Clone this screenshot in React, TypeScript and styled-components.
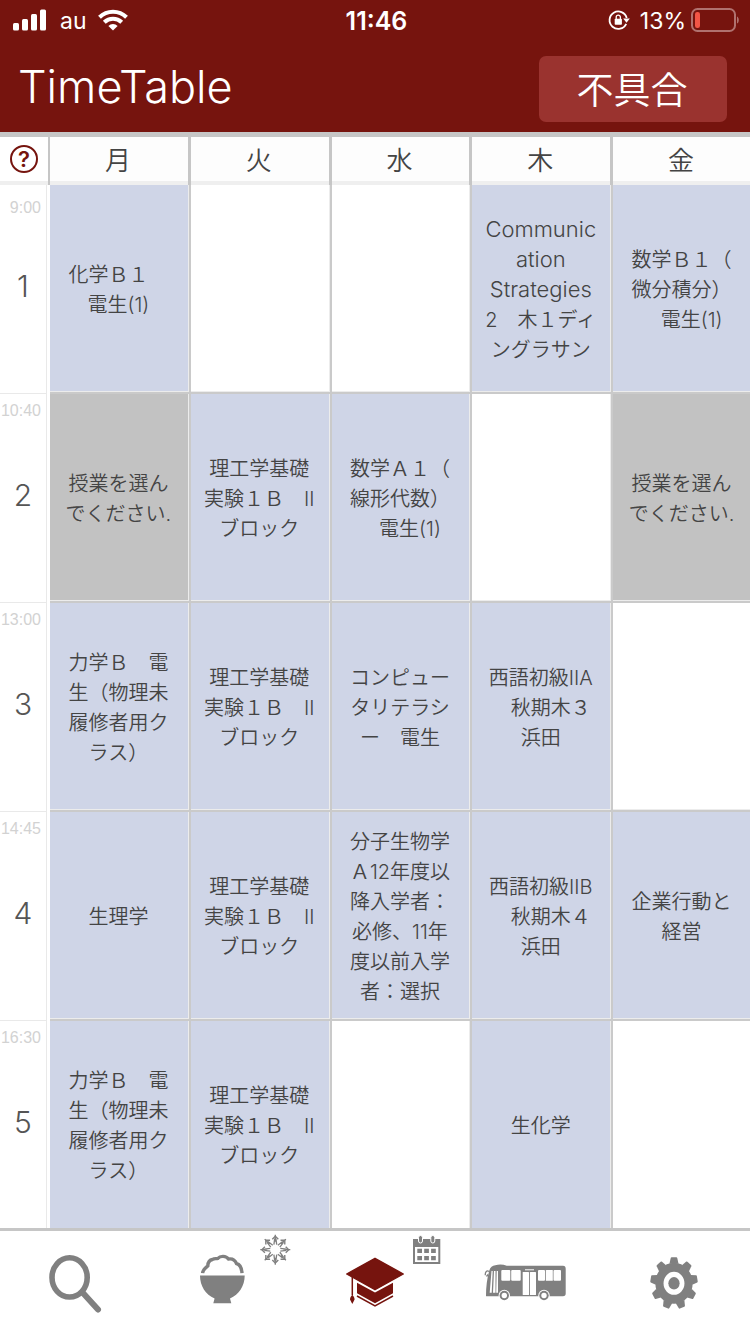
import React from "react";
import styled, { createGlobalStyle } from "styled-components";

const maroon = "#76140e";
const iconGrey = "#808080";
const ruleGrey = "#c6c6c6";

const GlobalStyle = createGlobalStyle`
  *, *::before, *::after { box-sizing: border-box; }
  body {
    margin: 0;
    background: #fff;
    color: #444;
    font-family: Inter, "Noto Sans CJK JP", sans-serif;
    font-weight: 350;
  }
`;

const Screen = styled.div`
  display: flex;
  flex-direction: column;
  min-height: 100vh;
`;

const Header = styled.header`
  background: ${maroon};
  color: #fff;
  border-bottom: 5px solid ${ruleGrey};
`;

const StatusBar = styled.div`
  display: grid;
  grid-template-columns: 1fr auto 1fr;
  align-items: center;
  height: 46px;
  padding: 0 10px 6px 13px;
  font-size: 23px;
  line-height: 38px;
  font-weight: 400;
`;

const StatusGroup = styled.div<{ $end?: boolean }>`
  display: flex;
  align-items: center;
  justify-content: ${(p) => (p.$end ? "flex-end" : "flex-start")};
  gap: ${(p) => (p.$end ? "5px" : "11px")};
`;

const StatusText = styled.span`
  padding: 2px 0 0 2px;
`;

const Clock = styled.time`
  padding-top: 2px;
  font-size: 25px;
  font-weight: 600;
`;

const Percent = styled(StatusText)`
  padding-left: 5px;
`;

const TitleBar = styled.div`
  display: flex;
  align-items: center;
  justify-content: space-between;
  height: 86px;
  padding: 0 23px 0 18px;
`;

const Title = styled.h1`
  margin: 0;
  padding-bottom: 4px;
  font-size: 45px;
  line-height: 60px;
  font-weight: 300;
`;

const ReportButton = styled.button`
  width: 188px;
  height: 66px;
  padding: 3px 2px 0 0;
  border: 0;
  border-radius: 7px;
  background: #9a332f;
  color: #fff;
  font: inherit;
  font-size: 37px;
  line-height: 60px;
`;

const TableFrame = styled.main`
  flex: 1;
  overflow: hidden;
`;

const Grid = styled.table`
  width: calc(100% + 4px);
  table-layout: fixed;
  border-collapse: separate;
  border-spacing: 0;
`;

const PeriodColumn = styled.col`
  width: 50px;
`;

const HeadRow = styled.tr`
  height: 48px;
`;

const DayHead = styled.th`
  padding: 0 2px 0 0;
  border-right: 3px solid ${ruleGrey};
  box-shadow: inset 0 -4px #efefef;
  background: #fdfdfd;
  font-size: 26px;
  line-height: 44px;
  font-weight: 350;
`;

const HelpHead = styled.th`
  padding: 0 0 4px 10px;
  border-right: 2px solid ${ruleGrey};
  box-shadow: inset 0 -4px #efefef;
  text-align: left;
`;

const HelpButton = styled.button`
  display: block;
  width: 28px;
  height: 28px;
  padding: 0;
  border: 2px solid ${maroon};
  border-radius: 50%;
  background: #fff;
  color: ${maroon};
  font: inherit;
  font-size: 22px;
  line-height: 24px;
  font-weight: 600;
`;

const PeriodRow = styled.tr`
  height: 209px;
  &:last-child { height: 207px; }
`;

const PeriodHead = styled.th`
  height: inherit;
  padding: 0 3px 0 0;
  vertical-align: top;
  font-weight: 300;
`;

const PeriodBox = styled.div`
  display: flex;
  flex-direction: column;
  align-items: center;
  height: 209px;
  border: solid #e9e9e9;
  border-width: 0 1px 1px 0;
  ${PeriodRow}:last-child & { height: 207px; border-bottom: 0; }
`;

const StartTime = styled.time`
  align-self: flex-end;
  height: 36px;
  padding: 4px 5px 0 0;
  color: #d2d2d2;
  font-family: "Liberation Sans", sans-serif;
  font-size: 16px;
  line-height: 26px;
  ${PeriodRow}:first-child & { padding-top: 10px; }
`;

const PeriodNumber = styled.span`
  margin-top: 45px;
  color: #555;
  font-size: 30px;
  line-height: 40px;
`;

const cellColor = { empty: "#fff", course: "#cfd5e7", pending: "#c2c2c2" };

const CourseCell = styled.td<{ $kind: keyof typeof cellColor }>`
  padding: 2px 2px 0 0;
  border: solid #cacaca;
  border-width: 0 2px 2px 0;
  box-shadow: inset -1px -1px #ececec;
  background: ${(p) => cellColor[p.$kind]};
  font-size: 20px;
  line-height: 30px;
  text-align: center;
  white-space: pre;
  ${PeriodRow}:last-child & { border-bottom: 0; box-shadow: inset -1px 0 #ececec; }
`;

const Latin = styled.span`
  font-size: 22px;
  line-height: 22px;
`;

const TabBar = styled.nav`
  display: grid;
  grid-template-columns: repeat(5, 1fr);
  border-top: 3px solid ${ruleGrey};
`;

const Tab = styled.a`
  display: flex;
  justify-content: center;
  color: ${(p) => (p["aria-current"] ? maroon : iconGrey)};
`;

const TabIcon = styled.svg`
  display: block;
  width: 150px;
  height: 103px;
`;

const pending = "授業を選ん\nでください.";
const experiment = "理工学基礎\n実験１Ｂ　II\nブロック";
const mechanics = "力学Ｂ　電\n生（物理未\n履修者用ク\nラス）";

const days = ["月", "火", "水", "木", "金"];

const periods: { start: string; courses: string[] }[] = [
  {
    start: "9:00",
    courses: [
      "化学Ｂ１　\n電生(1)",
      "",
      "",
      "Communic\nation\nStrategies\n2　木１ディ\nングラサン",
      "数学Ｂ１（\n微分積分）\n　電生(1)",
    ],
  },
  {
    start: "10:40",
    courses: [pending, experiment, "数学Ａ１（\n線形代数）\n　電生(1)", "", pending],
  },
  {
    start: "13:00",
    courses: [
      mechanics,
      experiment,
      "コンピュー\nタリテラシ\nー　電生",
      "西語初級IIA\n　秋期木３\n浜田",
      "",
    ],
  },
  {
    start: "14:45",
    courses: [
      "生理学",
      experiment,
      "分子生物学\nＡ12年度以\n降入学者：\n必修、11年\n度以前入学\n者：選択",
      "西語初級IIB\n　秋期木４\n浜田",
      "企業行動と\n経営",
    ],
  },
  { start: "16:30", courses: [mechanics, experiment, "", "生化学", ""] },
];

const kindOf = (course: string) =>
  course === "" ? "empty" : course === pending ? "pending" : "course";

const CourseName = ({ text }: { text: string }) => (
  <>
    {text
      .split(/([A-Za-z]{4,})/)
      .map((run, i) => (i % 2 ? <Latin key={i}>{run}</Latin> : run))}
  </>
);

const SignalIcon = () => (
  <svg width="34" height="22" viewBox="0 0 34 22" fill="#fff" aria-hidden="true">
    <rect x="0" y="14" width="6" height="7.5" rx="1.5" />
    <rect x="9" y="10" width="6" height="11.5" rx="1.5" />
    <rect x="18" y="5" width="6" height="16.5" rx="1.5" />
    <rect x="27" y="0.5" width="6" height="21" rx="1.5" />
  </svg>
);

const WifiIcon = () => (
  <svg width="30" height="22" viewBox="0 0 30 22" fill="none" stroke="#fff" strokeWidth="4" aria-hidden="true">
    <path d="M1.5 8.3a19.3 19.3 0 0 1 27 0" />
    <path d="M6.3 13.3a12.4 12.4 0 0 1 17.4 0" />
    <path d="M15 21.5l-4.6-4.6a6.6 6.6 0 0 1 9.2 0z" fill="#fff" stroke="none" />
  </svg>
);

const RotationLockIcon = () => (
  <svg width="22" height="22" viewBox="0 0 22 22" aria-hidden="true">
    <path d="M18.2 14.8A8.7 8.7 0 1 1 18.7 9" fill="none" stroke="#fff" strokeWidth="1.8" />
    <path d="M15.2 9.5h6.6l-3.3 4.2z" fill="#fff" />
    <rect x="6.7" y="9.8" width="7.2" height="6" rx="0.8" fill="#fff" />
    <path d="M8.2 10V8.2a2.1 2.1 0 0 1 4.2 0V10" fill="none" stroke="#fff" strokeWidth="1.3" />
  </svg>
);

const BatteryIcon = () => (
  <svg width="49" height="24" viewBox="0 0 49 24" aria-hidden="true">
    <rect x="1" y="1" width="43" height="22" rx="5.5" fill="none" stroke="#b0726f" strokeWidth="2" />
    <path d="M46 8.5c2.4 1 2.4 6 0 7z" fill="#b0726f" />
    <rect x="4" y="4" width="5" height="16" rx="2.2" fill="#f25546" />
  </svg>
);

const SearchIcon = () => (
  <TabIcon viewBox="0 0 150 103" fill="none" stroke="currentColor" aria-hidden="true">
    <ellipse cx="69.6" cy="46.4" rx="17.6" ry="19.6" strokeWidth="5.6" />
    <path d="M83 62l15 16.5" strokeWidth="6" strokeLinecap="round" />
  </TabIcon>
);

const MealIcon = () => (
  <TabIcon viewBox="0 0 150 103" fill="currentColor" aria-hidden="true">
    <path d="M50 44.5h44.7C94.7 55 89 63.5 80 67.5l1.3 4.8H63.3L64.6 67.5C55.5 63.5 50 55 50 44.5z" />
    <path
      d="M52.6 42.2C52.800 39 55 37 57.800 34.800C58 31 59.500 29 62.500 28.500C64.500 27 66 28 68 27.300C70 24.800 76 24.400 78.500 28C82 27.400 85 29 86.500 32.500C89.500 33.300 91.600 35.500 92 42.200"
      fill="none"
      stroke="currentColor"
      strokeWidth="3.4"
    />
    <g fill="none" stroke="currentColor">
      {[0, 45, 90, 135, 180, 225, 270, 315].map((angle) => (
        <g key={angle} transform={`translate(125.3 18.7) rotate(${angle})`}>
          <path d="M0-15v7M-1.4-5L-.6-11M1.4-5L.6-11" strokeWidth="1.3" />
          <path d="M-3-10.4L0-13.4l3 3" strokeWidth="1.4" />
        </g>
      ))}
    </g>
  </TabIcon>
);

const ClassIcon = () => (
  <TabIcon viewBox="0 0 150 103" fill="currentColor" aria-hidden="true">
    <path d="M75 27.3L103.3 43 75 58.7 46.7 43z" stroke="currentColor" strokeWidth="1.4" strokeLinejoin="round" />
    <path d="M57 51.8l18 9.7 18-9.7v10.5L75 72.3 57 62.3z" />
    <path d="M57 65l18 10 18-10" fill="none" stroke="currentColor" strokeWidth="1.5" />
    <path d="M52.3 46v18" stroke="currentColor" strokeWidth="1.5" />
    <path d="M52.3 63.5c1 2 2.3 2.6 2.3 5L52.3 73 50 68.5c0-2.4 1.3-3 2.3-5z" />
    <g fill={iconGrey}>
      <path fillRule="evenodd" d="M113 8h27.3v25H113zM115 16v15h23.3V16z" />
      <g stroke="#fff" strokeWidth="1">
        <rect x="118.5" y="4.5" width="4" height="7.5" rx="2" />
        <rect x="130.8" y="4.5" width="4" height="7.5" rx="2" />
      </g>
      {[117.3, 124.2, 131.1].map((x) => (
        <path key={x} d={`M${x} 17.8h4.7v4.2h-4.7zM${x} 25h4.7v4.2h-4.7z`} />
      ))}
    </g>
  </TabIcon>
);

const BusIcon = () => (
  <TabIcon viewBox="0 0 150 103" fill="currentColor" aria-hidden="true">
    <path d="M36 65c0-9 1-18 3.3-25.5 1-3.5 3-4.7 6-5.3 4-1 8-.8 11.4.6H113q2.7 0 2.7 3V62.5q0 2.8-2.7 2.8H37q-1 0-1-.3z" />
    <path d="M39 40.5c-2-1.5-4 0-3.7 3.8M38 43.5l-1.5 2" fill="none" stroke="currentColor" strokeWidth="1.3" />
    <g fill="#fff">
      <path d="M41.5 40h1.2l-1 21.8h-2zM44 40h1.5v21.8h-2.5zM46.7 40H48v21.8h-1.8z" />
      <rect x="51.3" y="39" width="9" height="10.7" rx="1" />
      <rect x="61.2" y="39" width="9.5" height="10.7" rx="1" />
      <rect x="72.7" y="41" width="6.3" height="23" rx="0.5" />
      <rect x="79.9" y="41" width="6.1" height="23" rx="0.5" />
      <rect x="75" y="38.3" width="9" height="1" />
      <rect x="88" y="39" width="7" height="10.7" rx="1" />
      <rect x="95.8" y="39" width="7" height="10.7" rx="0.5" />
      <rect x="103.5" y="39" width="7.5" height="10.7" rx="1" />
    </g>
    {[54.3, 94].map((cx) => (
      <g key={cx}>
        <circle cx={cx} cy="64.5" r="5.7" fill="#fff" />
        <circle cx={cx} cy="64.5" r="4.7" />
        <circle cx={cx} cy="64.5" r="2.7" fill="#fff" />
      </g>
    ))}
  </TabIcon>
);

const SettingsIcon = () => (
  <TabIcon viewBox="0 0 150 103" fill="currentColor" aria-hidden="true">
    <g transform="translate(74 52.3) scale(0.91 1)">
      <circle r="16" fill="none" stroke="currentColor" strokeWidth="9" />
      {Array.from({ length: 9 }, (_, i) => (
        <path key={i} d="M-5-19.5L-3.6-25.3Q-3.4-26-2.6-26H2.6Q3.4-26 3.6-25.3L5-19.5z" transform={`rotate(${i * 40})`} />
      ))}
      <circle r="6.2" />
    </g>
  </TabIcon>
);

const tabs = [
  { label: "検索", Icon: SearchIcon },
  { label: "食堂", Icon: MealIcon },
  { label: "時間割", Icon: ClassIcon },
  { label: "バス", Icon: BusIcon },
  { label: "設定", Icon: SettingsIcon },
];

export default function App() {
  return (
    <Screen>
      <GlobalStyle />
      <Header>
        <StatusBar>
          <StatusGroup>
            <SignalIcon />
            <StatusText>au</StatusText>
            <WifiIcon />
          </StatusGroup>
          <Clock>11:46</Clock>
          <StatusGroup $end>
            <RotationLockIcon />
            <Percent>13%</Percent>
            <BatteryIcon />
          </StatusGroup>
        </StatusBar>
        <TitleBar>
          <Title>TimeTable</Title>
          <ReportButton type="button">不具合</ReportButton>
        </TitleBar>
      </Header>
      <TableFrame>
        <Grid>
          <colgroup>
            <PeriodColumn />
            {days.map((day) => (
              <col key={day} />
            ))}
          </colgroup>
          <thead>
            <HeadRow>
              <HelpHead>
                <HelpButton type="button">?</HelpButton>
              </HelpHead>
              {days.map((day) => (
                <DayHead key={day} scope="col">
                  {day}
                </DayHead>
              ))}
            </HeadRow>
          </thead>
          <tbody>
            {periods.map(({ start, courses }, row) => (
              <PeriodRow key={start}>
                <PeriodHead scope="row">
                  <PeriodBox>
                    <StartTime>{start}</StartTime>
                    <PeriodNumber>{row + 1}</PeriodNumber>
                  </PeriodBox>
                </PeriodHead>
                {courses.map((course, column) => (
                  <CourseCell key={days[column]} $kind={kindOf(course)}>
                    <CourseName text={course} />
                  </CourseCell>
                ))}
              </PeriodRow>
            ))}
          </tbody>
        </Grid>
      </TableFrame>
      <TabBar>
        {tabs.map(({ label, Icon }) => (
          <Tab key={label} href="#" aria-label={label} aria-current={label === "時間割" ? "page" : undefined}>
            <Icon />
          </Tab>
        ))}
      </TabBar>
    </Screen>
  );
}
